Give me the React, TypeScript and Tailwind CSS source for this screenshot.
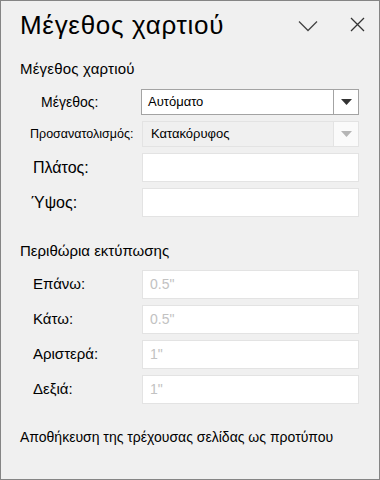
import React from "react";

const font = { fontFamily: '"Liberation Sans", Arial, sans-serif' };

function Field({ label, value, labelClass }: { label: string; value?: string; labelClass: string }) {
  return (
    <div className="flex items-center h-[29px]">
      <div className={`w-[141px] shrink-0 ${labelClass}`}>{label}</div>
      <div className="w-[217px] h-[29px] bg-white border border-[#e3e3e3] flex items-center pl-[7px] text-[14px] text-[#c2c2c2]">
        {value}
      </div>
    </div>
  );
}

function Caret({ color }: { color: string }) {
  return (
    <svg width="11" height="6" viewBox="0 0 11 6">
      <path d="M0 0 H11 L5.5 6 Z" fill={color} />
    </svg>
  );
}

export default function App() {
  return (
    <div style={font} className="w-[380px] h-[480px] border border-[#858585] bg-[#f0f0f0] text-black flex flex-col">
      <div className="flex items-center h-[46px] pl-[19px] pr-[14px] pt-[1px]">
        <div className="text-[26px] leading-none tracking-[0.7px] flex-1">Μέγεθος χαρτιού</div>
        <svg width="20" height="12" viewBox="0 0 20 12" className="mr-[32px] mt-[2px]">
          <path d="M1 1.5 L10 10.5 L19 1.5" stroke="#444" strokeWidth="1.3" fill="none" />
        </svg>
        <svg width="15" height="15" viewBox="0 0 15 15">
          <path d="M1 1 L14 14 M14 1 L1 14" stroke="#333" strokeWidth="1.3" fill="none" />
        </svg>
      </div>

      <div className="pl-[19px] mt-[13px] text-[15px] leading-[18px] tracking-[0.2px]">Μέγεθος χαρτιού</div>

      <div className="mt-[11px] flex flex-col">
        <div className="flex items-center h-[26px]">
          <div className="w-[140px] shrink-0 pl-[40px] text-[14px]">Μέγεθος:</div>
          <div className="w-[218px] h-[26px] bg-white border border-[#a3a3a3] flex items-stretch">
            <div className="flex-1 flex items-center pl-[6px] text-[13px]">Αυτόματο</div>
            <div className="w-[25px] border-l border-[#a3a3a3] flex items-center justify-center">
              <Caret color="#333" />
            </div>
          </div>
        </div>

        <div className="flex items-center h-[26px] mt-[6px]">
          <div className="w-[141px] shrink-0 pl-[29px] text-[12.5px] whitespace-nowrap">Προσανατολισμός:</div>
          <div className="w-[217px] h-[26px] bg-[#f0f0f0] border border-[#e3e3e3] flex items-stretch">
            <div className="flex-1 flex items-center pl-[8px] text-[13px]">Κατακόρυφος</div>
            <div className="w-[25px] border-l border-[#e3e3e3] bg-[#fafafa] flex items-center justify-center">
              <Caret color="#b5b5b5" />
            </div>
          </div>
        </div>

        <div className="mt-[6px] flex flex-col gap-[6px]">
          <Field label="Πλάτος:" labelClass="pl-[32px] text-[16px]" />
          <Field label="Ύψος:" labelClass="pl-[30px] text-[16px]" />
        </div>
      </div>

      <div className="pl-[19px] mt-[25px] text-[15px] leading-[18px]">Περιθώρια εκτύπωσης</div>

      <div className="mt-[10px] flex flex-col gap-[6px]">
        <Field label="Επάνω:" value={'0.5"'} labelClass="pl-[32px] text-[15px]" />
        <Field label="Κάτω:" value={'0.5"'} labelClass="pl-[32px] text-[15px]" />
        <Field label="Αριστερά:" value={'1"'} labelClass="pl-[32px] text-[15px]" />
        <Field label="Δεξιά:" value={'1"'} labelClass="pl-[32px] text-[15px]" />
      </div>

      <div className="pl-[19px] mt-[25px] text-[14px] leading-[17px] whitespace-nowrap">
        Αποθήκευση της τρέχουσας σελίδας ως προτύπου
      </div>
    </div>
  );
}
